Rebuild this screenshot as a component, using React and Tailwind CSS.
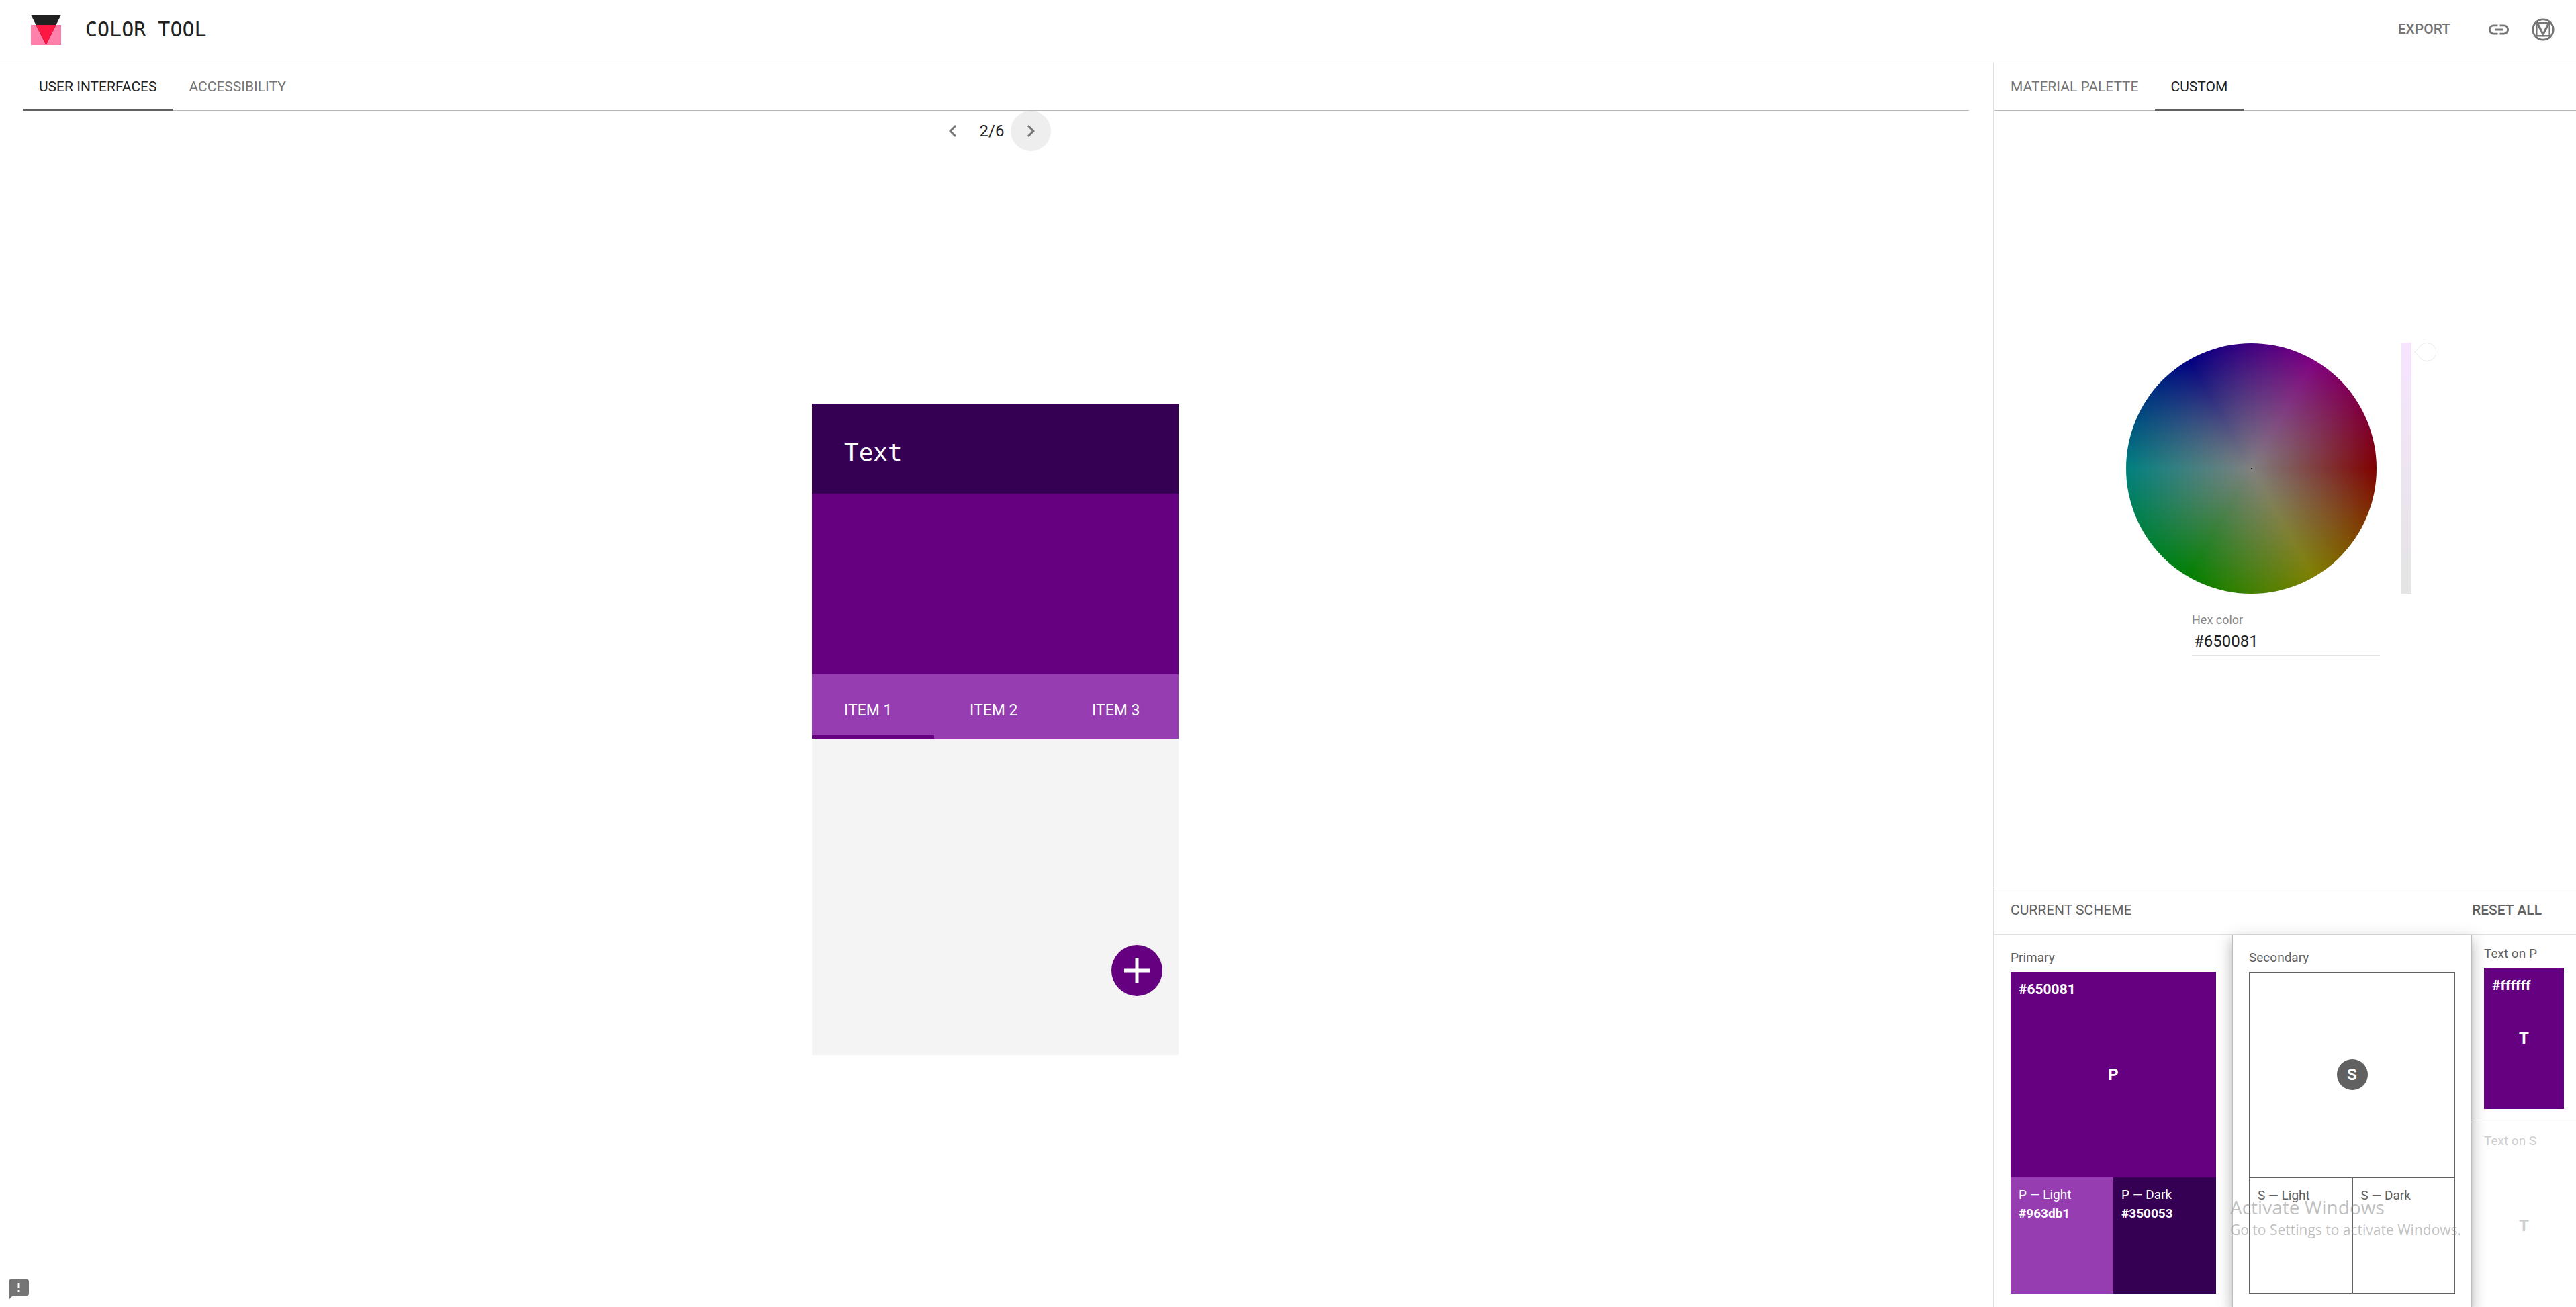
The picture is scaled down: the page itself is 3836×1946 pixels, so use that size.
import React, { useState } from "react";
import { MdChevronLeft, MdChevronRight, MdFeedback, MdLink } from "react-icons/md";

function TabBar({ label, tabs, active, onSelect }) {
  return (
    <div role="tablist" aria-label={label} className="flex h-18 shrink-0 shadow-[inset_0_-1px_0_#b9b9b9]">
      {tabs.map((tab) => (
        <button
          key={tab}
          type="button"
          role="tab"
          aria-selected={tab === active}
          onClick={() => onSelect(tab)}
          className={
            tab === active
              ? "px-6 pt-0.5 text-[21px] uppercase text-[#212121] shadow-[inset_0_-3px_0_#616161]"
              : "px-6 pt-0.5 text-[21px] uppercase text-[#757575]"
          }
        >
          {tab}
        </button>
      ))}
    </div>
  );
}

function Logo() {
  return (
    <svg viewBox="0 0 45 45" className="size-[45px]" aria-hidden="true">
      <path d="M0 15h45v30H0z" fill="#ff80ab" />
      <path d="M0 0h45L22.500 45z" fill="#212121" />
      <path d="M7.500 15h30L22.500 45z" fill="#ff1744" />
    </svg>
  );
}

function MaterialIcon() {
  return (
    <svg viewBox="0 0 36 36" className="size-9" fill="none" stroke="currentColor" aria-hidden="true">
      <circle cx="18" cy="18" r="15.200" strokeWidth="2.800" />
      <path d="M8.300 8.300h19.400v18.900H8.300z" strokeWidth="2.500" />
      <path d="M9.500 8.500l8.500 16.500 8.500-16.500" strokeWidth="3.200" />
    </svg>
  );
}

function Header() {
  return (
    <header className="flex h-[93px] shrink-0 items-center border-b border-[#e0e0e0] pb-1 pr-[31px] pl-[46px]">
      <Logo />
      <h1 className="ml-9 flex-1 font-['DejaVu_Sans_Mono','Liberation_Mono',monospace] text-[30px] leading-10 text-[#212121]">
        COLOR TOOL
      </h1>
      <div className="flex items-center text-[#757575]">
        <button type="button" className="mr-[54px] text-[21px] font-medium">
          EXPORT
        </button>
        <button type="button" aria-label="Copy link" className="mr-[30px]">
          <MdLink className="size-9" />
        </button>
        <a href="#material" aria-label="Material Design">
          <MaterialIcon />
        </a>
      </div>
    </header>
  );
}

function Pager({ page, total, onChange }) {
  return (
    <div className="mr-3 flex items-center gap-2.5 self-center text-2xl text-[#212121]">
      <button
        type="button"
        aria-label="Previous"
        onClick={() => onChange(Math.max(1, page - 1))}
        className="flex size-15 items-center justify-center rounded-full text-[#757575]"
      >
        <MdChevronLeft className="size-9" />
      </button>
      <span>
        {page}/{total}
      </span>
      <button
        type="button"
        aria-label="Next"
        onClick={() => onChange(Math.min(total, page + 1))}
        className="flex size-15 items-center justify-center rounded-full bg-[#eeeeee] text-[#757575]"
      >
        <MdChevronRight className="size-9" />
      </button>
    </div>
  );
}

function PhonePreview() {
  return (
    <div className="relative flex h-[970px] w-[546px] flex-col bg-[#f4f4f4] text-white">
      <div className="flex h-[134px] items-center bg-[#350053] pt-3 pl-12 font-['DejaVu_Sans_Mono','Liberation_Mono',monospace] text-4xl">
        Text
      </div>
      <div className="h-[269px] bg-[#650081]" />
      <div className="grid h-24 grid-cols-3 bg-[#963db1] text-[23px]">
        <button type="button" className="border-b-6 border-[#650081] pt-5 pl-12 text-left">
          ITEM 1
        </button>
        <button type="button" className="border-b-6 border-transparent pt-5 pl-[53px] text-left">
          ITEM 2
        </button>
        <button type="button" className="border-b-6 border-transparent pt-5 pl-[53px] text-left">
          ITEM 3
        </button>
      </div>
      <button
        type="button"
        aria-label="Add"
        className="absolute right-6 bottom-22 flex size-19 items-center justify-center rounded-full bg-[#650081]"
      >
        <svg viewBox="0 0 38 38" className="size-[38px]" stroke="#fff" strokeWidth="5" aria-hidden="true">
          <path d="M19 0v38M0 19h38" />
        </svg>
      </button>
    </div>
  );
}

function ColorWheel() {
  return (
    <div className="flex items-start">
      <div className="m-px flex size-[373px] items-center justify-center rounded-full bg-[radial-gradient(closest-side,#808080,#80808000),conic-gradient(from_90deg,#800000,#808000,#008000,#008080,#000080,#800080,#800000)]">
        <div className="size-0.5 rounded-full bg-black" />
      </div>
      <div className="ml-9 h-[375px] w-[15px] bg-linear-to-b from-[#f7e4ff] to-[#e4e4e4]" />
      <svg viewBox="0 0 34 28" className="ml-1 h-7 w-[34px]" fill="#fff" stroke="#e8e8e8" aria-hidden="true">
        <path d="M1 14L9.500 4.500C12.500 1.800 15.500.5 19.500.5a13.500 13.500 0 0 1 0 27c-4 0-7-1.300-10-4z" />
      </svg>
    </div>
  );
}

function HexField() {
  const [hex, setHex] = useState("#650081");
  return (
    <div className="ml-0.5 mt-[26px] flex w-[280px] flex-col">
      <label htmlFor="hex-color" className="text-lg leading-6 text-[#8a8a8a]">
        Hex color
      </label>
      <input
        id="hex-color"
        value={hex}
        onChange={(e) => setHex(e.target.value)}
        className="h-[42px] w-full border-b-2 border-[#e4e4e4] px-[3px] text-2xl text-[#212121] outline-none"
      />
    </div>
  );
}

function Shade({ name, hex, className }) {
  return (
    <button
      type="button"
      className={"flex flex-1 flex-col items-start px-3 pt-3 text-left text-[19px] leading-7 " + className}
    >
      <span>{name}</span>
      {hex && <span className="font-bold">{hex}</span>}
    </button>
  );
}

function TextSwatch({ label, hex, className, boxClassName }) {
  return (
    <div className={"px-[18px] " + className}>
      <div className="pt-3.5 pb-[7px] text-[19px] leading-7 text-[#616161]">{label}</div>
      <button type="button" className={"relative flex h-[210px] w-full items-center justify-center " + boxClassName}>
        {hex && <span className="absolute top-3 left-3 text-[21px] leading-7 font-bold">{hex}</span>}
        <span className="text-2xl font-bold">T</span>
      </button>
    </div>
  );
}

function Scheme() {
  return (
    <section className="flex h-[626px] shrink-0 flex-col overflow-hidden">
      <div className="flex h-[72px] shrink-0 items-center border-y border-[#e0e0e0] pr-[51px] pl-6 text-[21px] text-[#616161]">
        <h2 className="flex-1">CURRENT SCHEME</h2>
        <button type="button" className="font-medium">
          RESET ALL
        </button>
      </div>
      <div className="flex min-h-0 flex-1">
        <div className="flex w-[354px] flex-col px-6 pb-5">
          <div className="pt-5 pb-[7px] text-[19px] leading-7 text-[#616161]">Primary</div>
          <button
            type="button"
            className="relative flex h-[306px] shrink-0 items-center justify-center bg-[#650081] text-white"
          >
            <span className="absolute top-3 left-3 text-[21px] leading-7 font-bold">#650081</span>
            <span className="text-2xl font-bold">P</span>
          </button>
          <div className="flex flex-1">
            <Shade name="P — Light" hex="#963db1" className="bg-[#963db1] text-white" />
            <Shade name="P — Dark" hex="#350053" className="bg-[#350053] text-white" />
          </div>
        </div>
        <div className="relative flex w-[357px] flex-col border-x border-[#bdbdbd] bg-white px-6 pb-5 shadow-[0_7px_7px_-4px_#00000033,0_12px_15px_1px_#00000024,0_5px_22px_4px_#0000001f]">
          <div className="pt-5 pb-[7px] text-[19px] leading-7 text-[#616161]">Secondary</div>
          <button
            type="button"
            className="flex h-[306px] shrink-0 items-center justify-center border border-[#616161]"
          >
            <span className="flex size-[46px] items-center justify-center rounded-full bg-[#616161] text-2xl font-bold text-white">
              S
            </span>
          </button>
          <div className="flex flex-1">
            <Shade name="S — Light" className="border border-[#616161] text-[#616161]" />
            <Shade name="S — Dark" className="border border-[#616161] text-[#616161]" />
          </div>
        </div>
        <div className="flex-1">
          <TextSwatch
            label="Text on P"
            hex="#ffffff"
            className="h-[279px] border-b border-[#b9b9b9]"
            boxClassName="bg-[#650081] text-white"
          />
          <TextSwatch label="Text on S" className="opacity-30" boxClassName="text-[#616161]" />
        </div>
      </div>
    </section>
  );
}

export default function App() {
  const [view, setView] = useState("User interfaces");
  const [palette, setPalette] = useState("Custom");
  const [page, setPage] = useState(2);

  return (
    <div className="relative flex h-screen flex-col bg-white font-['Roboto','Liberation_Sans',sans-serif]">
      <Header />
      <div className="flex min-h-0 flex-1">
        <main className="flex flex-1 flex-col pr-9 pl-[34px]">
          <TabBar label="Preview" tabs={["User interfaces", "Accessibility"]} active={view} onSelect={setView} />
          <Pager page={page} total={6} onChange={setPage} />
          <div className="mr-0.5 flex flex-1 items-center justify-center">
            <PhonePreview />
          </div>
        </main>
        <aside className="flex w-[868px] shrink-0 flex-col border-l border-[#e0e0e0] pl-px">
          <TabBar label="Palette" tabs={["Material palette", "Custom"]} active={palette} onSelect={setPalette} />
          <div className="flex flex-1 flex-col items-center justify-center pt-0.5">
            <div className="pr-3">
              <ColorWheel />
            </div>
            <HexField />
          </div>
          <Scheme />
        </aside>
      </div>

      <button type="button" aria-label="Send feedback" className="absolute bottom-2 left-2.5 text-[#757575]">
        <MdFeedback className="size-9" />
      </button>

      <div className="pointer-events-none absolute right-[174px] bottom-[99px] w-[341px] font-['Open_Sans','Noto_Sans',sans-serif] whitespace-nowrap text-[#8a8a8a8c]">
        <p className="text-[28px] leading-9">Activate Windows</p>
        <p className="text-[21px] leading-8">Go to Settings to activate Windows.</p>
      </div>
    </div>
  );
}
